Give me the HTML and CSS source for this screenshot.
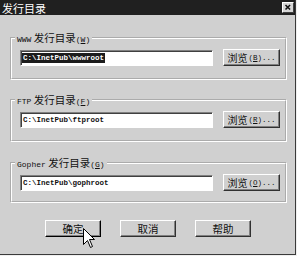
FILE: index.html
```html
<!DOCTYPE html>
<html lang="zh-CN">
<head>
<meta charset="utf-8">
<title>发行目录</title>
<link rel="stylesheet" href="styles.css">
</head>
<body>
<div class="dialog">
  <div class="titlebar">
    <span class="title">发行目录</span>
    <span class="close"><svg width="12" height="11" viewBox="0 0 12 11"><path d="M3 2.5 L8.5 8 M8.5 2.5 L3 8" stroke="#111" stroke-width="1.8"/></svg></span>
  </div>
  <div class="body">
    <fieldset class="group">
      <legend><span class="en">WWW</span> 发行目录<span class="en">(<u>W</u>)</span></legend>
      <div class="row">
        <div class="field"><span class="sel">C:\InetPub\wwwroot</span></div>
        <div class="btn browse">浏览<span class="en">(<u>B</u>)...</span></div>
      </div>
    </fieldset>
    <fieldset class="group">
      <legend><span class="en">FTP</span> 发行目录<span class="en">(<u>F</u>)</span></legend>
      <div class="row">
        <div class="field"><span class="txt">C:\InetPub\ftproot</span></div>
        <div class="btn browse">浏览<span class="en">(<u>R</u>)...</span></div>
      </div>
    </fieldset>
    <fieldset class="group last">
      <legend><span class="en">Gopher</span> 发行目录<span class="en">(<u>G</u>)</span></legend>
      <div class="row">
        <div class="field"><span class="txt">C:\InetPub\gophroot</span></div>
        <div class="btn browse">浏览<span class="en">(<u>O</u>)...</span></div>
      </div>
    </fieldset>
    <div class="actions">
      <div class="btn action default">确定</div>
      <div class="btn action">取消</div>
      <div class="btn action">帮助</div>
    </div>
  </div>
  <svg class="cursor" width="13" height="21" viewBox="0 0 13 21"><path d="M0.5 0.5 L0.5 16.5 L4.5 12.5 L7.5 19.5 L9.5 18.5 L6.5 11.5 L11.5 11.5 Z" fill="#fff" stroke="#000" stroke-width="1"/></svg>
</div>
</body>
</html>
```
FILE: styles.css
```css
html, body {
  margin: 0;
  padding: 0;
  background: #efefef;
}
body {
  font-family: "Noto Sans CJK SC", "Liberation Sans", sans-serif;
  font-size: 11px;
  color: #111;
}
.dialog {
  position: relative;
  width: 295px;
  height: 254px;
  background: #d0d0d0;
  border-right: 1px solid #3a3a3a;
  border-bottom: 1px solid #3a3a3a;
  overflow: hidden;
}
.titlebar {
  height: 15px;
  background: #202020;
  display: flex;
  align-items: center;
  justify-content: space-between;
  padding: 0 1px 0 2px;
}
.title {
  color: #fff;
  font-size: 11px;
  line-height: 12px;
  letter-spacing: 0;
}
.close {
  width: 12px;
  height: 11px;
  background: #d6d6d6;
  border: 1px solid;
  border-color: #fff #404040 #404040 #fff;
  box-sizing: border-box;
  display: flex;
  align-items: center;
  justify-content: center;
}
.close svg { display: block; }
.body {
  padding: 17px 8px 0 10px;
}
.group {
  margin: 0;
  border: 2px groove #fff;
  padding: 5px 5px 12px 3px;
  min-width: 0;
}
.group + .group {
  margin-top: 14px;
}
.group.last {
  margin-top: 15px;
  padding-bottom: 10px;
}
.group legend {
  padding: 0 2px;
  line-height: 12px;
  height: 12px;
  font-size: 10.5px;
}
.en {
  font-family: "Liberation Mono", monospace;
  font-size: 7.5px;
}
.group legend .en {
  font-size: 8px;
}
.row {
  display: flex;
  align-items: flex-start;
  gap: 10px;
  padding-left: 5px;
  height: 17px;
}
.field {
  width: 193px;
  height: 16px;
  margin-top: 1px;
  box-sizing: border-box;
  background: #fff;
  border: 1px solid;
  border-color: #808080 #fff #fff #808080;
  box-shadow: inset 1px 1px 0 #404040;
  display: flex;
  align-items: center;
  padding-left: 1px;
  font-family: "Liberation Mono", monospace;
  font-size: 7.5px;
  font-weight: bold;
}
.sel {
  background: #1c1c1c;
  color: #fff;
  padding: 1px 1px;
}
.txt {
  padding-left: 1px;
  color: #111;
}
.btn {
  background: #d0d0d0;
  border: 1px solid;
  border-color: #fff #303030 #303030 #fff;
  box-shadow: inset -1px -1px 0 #808080;
  box-sizing: border-box;
  display: flex;
  align-items: center;
  justify-content: center;
  line-height: 12px;
}
.browse {
  width: 57px;
  height: 17px;
  font-size: 10px;
}
.browse .en { margin-left: 1px; }
.actions {
  display: flex;
  gap: 19px;
  padding-left: 35px;
  margin-top: 17px;
}
.action {
  width: 56px;
  height: 17px;
  font-size: 10.5px;
}
.action.default {
  border-color: #fff #000 #000 #fff;
}
.cursor {
  position: absolute;
  left: 83px;
  top: 228px;
}
```
